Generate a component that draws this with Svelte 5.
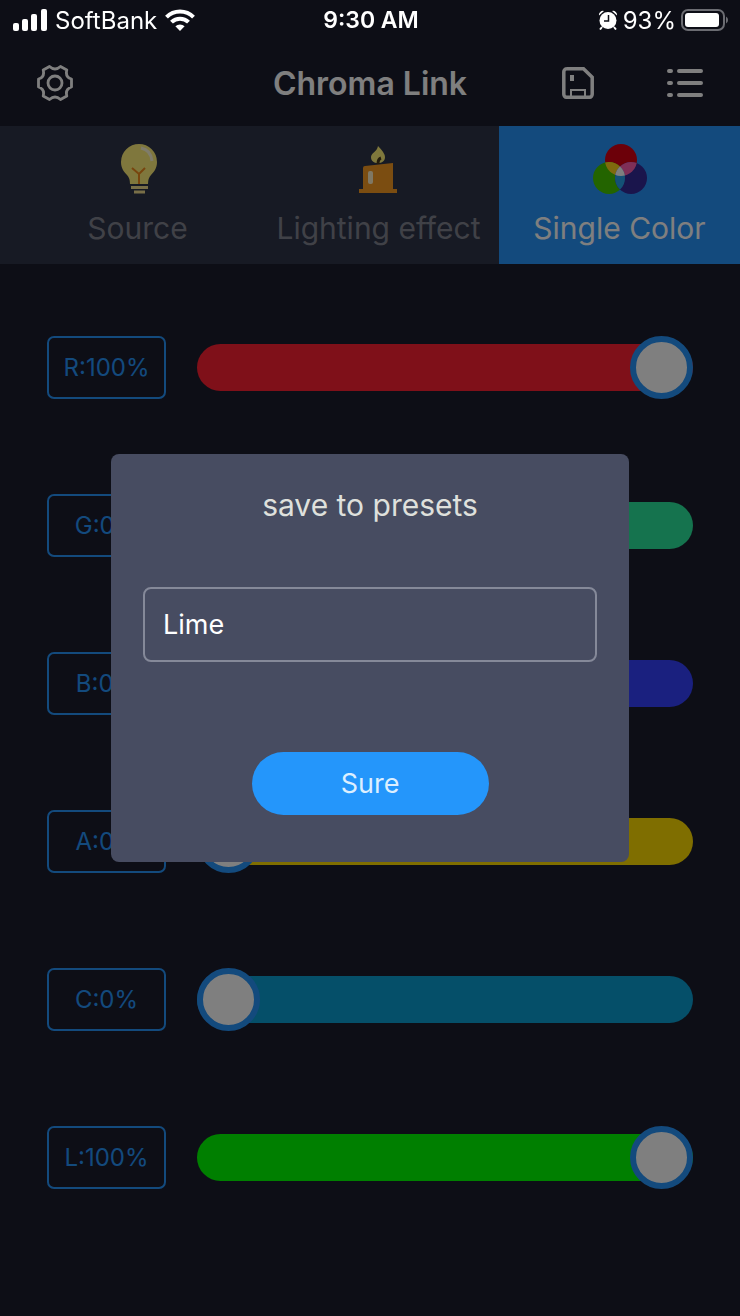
<script lang="ts">
  type Channel = {
    letter: string;
    name: string;
    value: number;
    color: string;
  };

  let channels: Channel[] = [
    { letter: "R", name: "Red", value: 100, color: "#ff2033" },
    { letter: "G", name: "Green", value: 0, color: "#2ae69c" },
    { letter: "B", name: "Blue", value: 0, color: "#3440ff" },
    { letter: "A", name: "Amber", value: 0, color: "#ffdc00" },
    { letter: "C", name: "Cyan", value: 0, color: "#0a9ed2" },
    { letter: "L", name: "Lime", value: 100, color: "#00ff00" },
  ];

  let tab = "single";
  let presetName = "Lime";
  let dialogOpen = true;

  function save() {
    dialogOpen = false;
  }
</script>

<div class="page">
  <div class="status">
    <div class="side">
      <svg width="34" height="22" viewBox="0 0 34 22" fill="#fff">
        <rect x="0" y="14" width="6" height="8" rx="2" />
        <rect x="9" y="10" width="6" height="12" rx="2" />
        <rect x="18" y="5" width="6" height="17" rx="2" />
        <rect x="28" y="0" width="6" height="22" rx="2" />
      </svg>
      <span class="carrier">SoftBank</span>
      <svg width="30" height="22" viewBox="0 0 30 22" fill="none" stroke="#fff" stroke-width="4">
        <path d="M1.5 8.2a19 19 0 0 1 27 0" />
        <path d="M6.5 13.2a12 12 0 0 1 17 0" />
        <path d="M15 22l-4.600-4.700a6.500 6.500 0 0 1 9.200 0z" fill="#fff" stroke="none" />
      </svg>
    </div>
    <span class="time">9:30 AM</span>
    <div class="side right">
      <svg width="20" height="20" viewBox="0 0 20 20">
        <circle cx="10" cy="10.500" r="8.500" fill="#fff" />
        <path d="M1 5.500a4 4 0 0 1 5-4.500zM19 5.500a4 4 0 0 0-5-4.500z" fill="#fff" />
        <path d="M4 17l-2 2.500M16 17l2 2.500" stroke="#fff" stroke-width="2" />
        <path d="M10.500 5v6H6" fill="none" stroke="#0d0e16" stroke-width="1.500" />
      </svg>
      <span class="percent">93%</span>
      <svg width="48" height="22" viewBox="0 0 48 22">
        <rect x="1" y="1" width="42" height="20" rx="6" fill="none" stroke="#6b6c72" stroke-width="2" />
        <rect x="4" y="4" width="34" height="14" rx="3" fill="#fff" />
        <path d="M45 7.500a4 4 0 0 1 0 7z" fill="#6b6c72" />
      </svg>
    </div>
  </div>

  <header>
    <button class="icon" aria-label="Settings">
      <svg width="36" height="36" viewBox="0 0 36 36" fill="none" stroke="#fff" stroke-width="2.800" stroke-linejoin="round">
        <path
          d="M12.500 1.500Q18 6.500 23.500 1.500L29.800 5Q28 12 34.500 14V22Q28 24 29.800 31L23.500 34.500Q18 29.500 12.500 34.500L6.200 31Q8 24 1.500 22V14Q8 12 6.200 5Z"
        />
        <circle cx="18" cy="18" r="7" />
      </svg>
    </button>
    <h1>Chroma Link</h1>
    <div class="actions">
      <button class="icon" aria-label="Save" on:click={() => (dialogOpen = true)}>
        <svg width="32" height="32" viewBox="0 0 32 32" fill="none" stroke="#fff" stroke-width="3.500">
          <path d="M4.500 1.800h17l8.700 8.500v17a3 3 0 0 1-3 3H4.800a3 3 0 0 1-3-3V4.800a3 3 0 0 1 3-3z" />
          <path d="M9 30v-7h14v7" stroke-width="2" />
          <path d="M10 8v6" stroke-width="4" />
        </svg>
      </button>
      <button class="icon" aria-label="Presets">
        <svg width="36" height="30" viewBox="0 0 36 30" stroke="#fff" stroke-width="4" stroke-linecap="round">
          <path d="M2 3h2M12 3h22M2 15h2M12 15h22M2 27h2M12 27h22" />
        </svg>
      </button>
    </div>
  </header>

  <nav>
    <button class:active={tab === "source"} on:click={() => (tab = "source")}>
      <svg width="52" height="52" viewBox="0 0 52 52">
        <path d="M27 1a18 18 0 0 0-18 18c0 6 3 10 6 13q3 3 3 9h18q0-6 3-9c3-3 6-7 6-13A18 18 0 0 0 27 1z" fill="#ffee7a" />
        <path d="M20 25l7 6 6-6M27 31v10" fill="none" stroke="#f08a1d" stroke-width="2" />
        <path d="M29 5q10 2 11 13" fill="none" stroke="#fff8d6" stroke-width="3" />
        <path d="M19 44.500h17M22 49h11" stroke="#f3df91" stroke-width="3" />
      </svg>
      Source
    </button>
    <button class:active={tab === "effect"} on:click={() => (tab = "effect")}>
      <svg width="52" height="52" viewBox="0 0 52 52">
        <path d="M25 3q7 7 7 11c0 4-3 6-7 6s-7-2-7-6c0-4 6-5 7-11z" fill="#fff078" />
        <path d="M25 21q0-5 3-6" fill="none" stroke="#493819" stroke-width="3" />
        <path d="M10 25q0-2 2-2l28-3v26h4v4H6v-4h4z" fill="#f79b23" />
        <rect x="15" y="28" width="5" height="13" rx="2" fill="#fff1c8" />
      </svg>
      Lighting effect
    </button>
    <button class:active={tab === "single"} on:click={() => (tab = "single")}>
      <svg width="54" height="52" viewBox="0 0 54 52">
        <defs>
          <clipPath id="clip-red"><circle cx="28" cy="17" r="16" /></clipPath>
          <clipPath id="clip-green"><circle cx="16" cy="35" r="16" /></clipPath>
        </defs>
        <circle cx="28" cy="17" r="16" fill="#d90012" />
        <circle cx="16" cy="35" r="16" fill="#46c800" />
        <circle cx="38" cy="35" r="16" fill="#342a99" />
        <circle cx="16" cy="35" r="16" fill="#ffd51c" clip-path="url(#clip-red)" />
        <circle cx="38" cy="35" r="16" fill="#ff5fae" clip-path="url(#clip-red)" />
        <g clip-path="url(#clip-green)">
          <circle cx="38" cy="35" r="16" fill="#28a3ec" />
          <circle cx="38" cy="35" r="16" fill="#fff" clip-path="url(#clip-red)" />
        </g>
      </svg>
      Single Color
    </button>
  </nav>

  <main>
    {#each channels as channel (channel.letter)}
      <div class="channel">
        <label for="channel-{channel.letter}">{channel.letter}:{channel.value}%</label>
        <input
          type="range"
          id="channel-{channel.letter}"
          aria-label={channel.name}
          style="--track: {channel.color}"
          bind:value={channel.value}
        />
      </div>
    {/each}
  </main>
</div>

{#if dialogOpen}
  <div class="overlay">
    <form class="dialog" role="dialog" aria-labelledby="dialog-title" on:submit|preventDefault={save}>
      <label id="dialog-title" for="preset-name">save to presets</label>
      <input type="text" id="preset-name" bind:value={presetName} />
      <button type="submit">Sure</button>
    </form>
  </div>
{/if}

<style>
  :global(body) {
    background-color: #1a1c2c;
    font-family: Inter, "Liberation Sans", sans-serif;
  }

  button,
  input {
    font-family: inherit;
    box-sizing: border-box;
  }

  button {
    border: 0;
    cursor: pointer;
  }

  svg {
    display: block;
  }

  .page {
    min-height: 100vh;
  }

  .status {
    position: relative;
    z-index: 2;
    display: grid;
    grid-template-columns: 1fr auto 1fr;
    align-items: center;
    height: 40px;
    padding: 0 11px 0 13px;
    color: #fff;
    font-size: 24px;
  }

  .side {
    display: flex;
    align-items: center;
    gap: 8px;
  }

  .right {
    justify-content: flex-end;
    gap: 5px;
  }

  .time {
    font-size: 23px;
    font-weight: 600;
  }

  header {
    display: grid;
    grid-template-columns: 1fr auto 1fr;
    align-items: center;
    height: 86px;
    padding: 0 37px;
  }

  h1 {
    margin: 0;
    color: #fff;
    font-size: 32px;
    font-weight: 600;
  }

  .icon {
    justify-self: start;
    padding: 0;
    background-color: transparent;
  }

  .actions {
    display: flex;
    align-items: center;
    justify-content: flex-end;
    gap: 73px;
  }

  nav {
    display: grid;
    grid-template-columns: repeat(3, 1fr);
    padding-left: 17px;
    background-color: #2e3448;
  }

  nav button {
    display: flex;
    flex-direction: column;
    align-items: center;
    gap: 11px;
    height: 138px;
    padding: 17px 0 0;
    background-color: transparent;
    color: #80838e;
    font-size: 30px;
    line-height: 44px;
    white-space: nowrap;
  }

  nav button.active {
    background-color: #2694fa;
    color: #fff;
  }

  main {
    display: flex;
    flex-direction: column;
    gap: 95px;
    padding: 72px 47px;
  }

  .channel {
    display: flex;
    align-items: center;
    gap: 31px;
  }

  .channel label {
    box-sizing: border-box;
    width: 119px;
    height: 63px;
    border: 2px solid #2694fa;
    border-radius: 7px;
    color: #2694fa;
    font-size: 24px;
    line-height: 60px;
    text-align: center;
  }

  input[type="range"] {
    flex: 1;
    min-width: 0;
    height: 63px;
    margin: 0;
    appearance: none;
    background: transparent;
  }

  input[type="range"]::-webkit-slider-runnable-track {
    height: 47px;
    border-radius: 24px;
    background-color: var(--track);
  }

  input[type="range"]::-webkit-slider-thumb {
    appearance: none;
    box-sizing: border-box;
    width: 63px;
    height: 63px;
    margin-top: -8px;
    border: 6px solid #2694fa;
    border-radius: 50%;
    background-color: #fff;
  }

  .overlay {
    position: fixed;
    inset: 0;
    z-index: 1;
    display: flex;
    align-items: center;
    justify-content: center;
    background-color: rgba(0, 0, 0, 0.5);
  }

  .dialog {
    display: flex;
    flex-direction: column;
    align-items: center;
    box-sizing: border-box;
    width: 70%;
    padding: 32px 32px 47px;
    border-radius: 8px;
    background-color: #474c61;
  }

  .dialog label {
    color: #dfe0dc;
    font-size: 30px;
    line-height: 38px;
  }

  .dialog input {
    width: 100%;
    height: 75px;
    margin: 63px 0 90px;
    padding: 0 18px;
    border: 2px solid #858999;
    border-radius: 8px;
    background-color: transparent;
    color: #fff;
    font-size: 27px;
  }

  .dialog button {
    width: 237px;
    height: 63px;
    border-radius: 32px;
    background-color: #2496fb;
    color: #dcefff;
    font-size: 27px;
  }
</style>
